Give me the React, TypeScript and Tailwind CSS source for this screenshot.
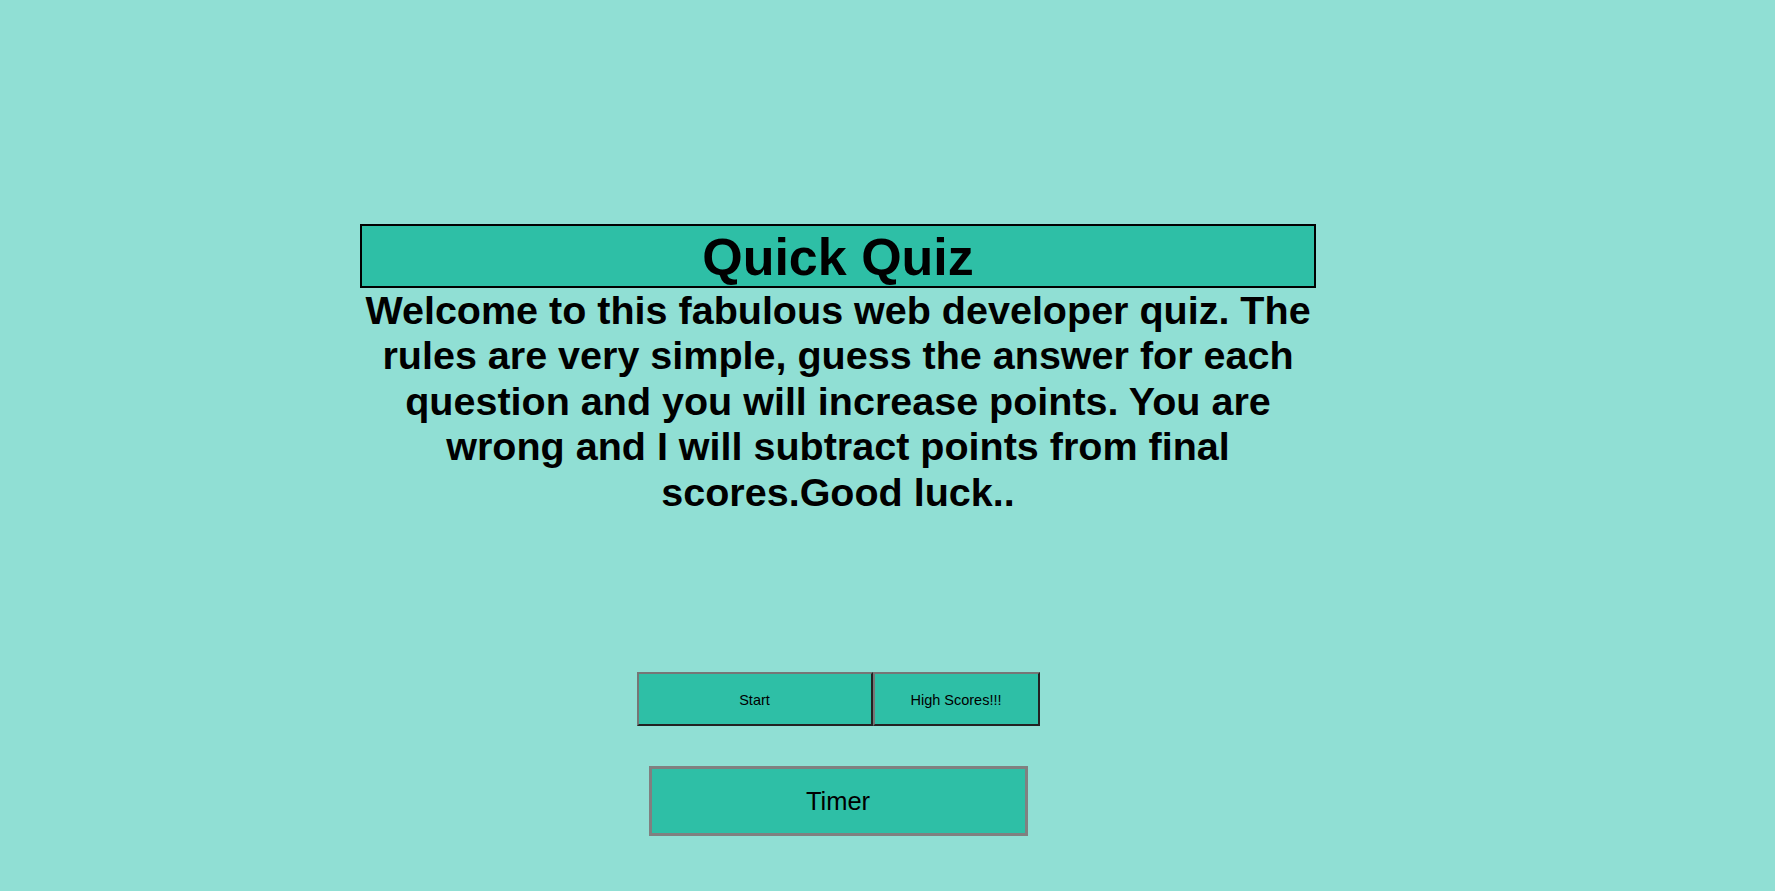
export default function App() {
  return (
    <div className="min-h-[891px] w-full bg-[#90dfd4] font-['Liberation_Sans',Arial,sans-serif] text-black">
      <div className="flex w-[1676px] flex-col items-center pt-[224px]">
        <div className="w-[956px]">
          <h1 className="h-[64px] border-2 border-black bg-[#2ebfa6] pt-[2px] text-center text-[52px] font-bold leading-[58px]">
            Quick Quiz
          </h1>
          <p className="text-center text-[39.5px] font-bold leading-[45.4px]">
            Welcome to this fabulous web developer quiz. The rules are very simple, guess the answer for each
            question and you will increase points. You are wrong and I will subtract points from final
            scores.Good luck..
          </p>
        </div>

        <div className="mt-[157px] flex">
          <button className="h-[54px] w-[236px] border-2 border-t-[#767676] border-l-[#767676] border-r-[#222] border-b-[#222] bg-[#2ebfa6] pt-[3px] text-[14.5px]">
            Start
          </button>
          <button className="h-[54px] w-[167px] border-2 border-t-[#767676] border-l-[#767676] border-r-[#222] border-b-[#222] bg-[#2ebfa6] pt-[3px] text-[14.5px]">
            High Scores!!!
          </button>
        </div>

        <div className="mt-[40px] flex h-[70px] w-[379px] items-center justify-center border-[3px] border-[#808080] bg-[#2ebfa6] text-[25.5px]">
          Timer
        </div>
      </div>
    </div>
  );
}
